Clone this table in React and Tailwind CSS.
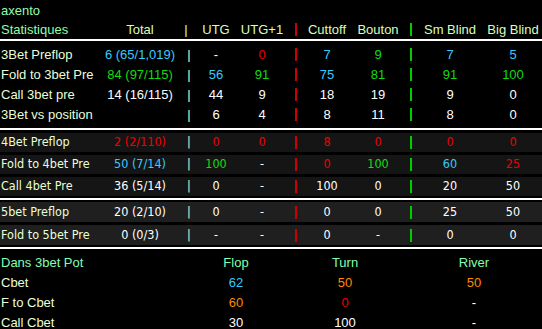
import React from "react";

const C = {
  c: "text-[#33ccff]",
  g: "text-[#11dd11]",
  r: "text-[#ee0000]",
  w: "text-white",
  o: "text-[#ff8800]",
};

const cols =
  "grid grid-cols-[104px_72px_26px_28px_64px_4px_58px_44px_22px_56px_70px] items-center";

const sections = [
  {
    bg: "bg-black",
    h: "h-[20px]",
    rows: [
      ["3Bet Preflop", ["6 (65/1,019)", "c"], [["-", "w"], ["0", "r"], ["7", "c"], ["9", "g"], ["7", "c"], ["5", "c"]]],
      ["Fold to 3bet Pre", ["84 (97/115)", "g"], [["56", "c"], ["91", "g"], ["75", "c"], ["81", "g"], ["91", "g"], ["100", "g"]]],
      ["Call 3bet pre", ["14 (16/115)", "w"], [["44", "w"], ["9", "w"], ["18", "w"], ["19", "w"], ["9", "w"], ["0", "w"]]],
      ["3Bet vs position", ["", "w"], [["6", "w"], ["4", "w"], ["8", "w"], ["11", "w"], ["8", "w"], ["0", "w"]]],
    ],
  },
  {
    bg: "bg-[#151515]",
    h: "h-[19px]",
    rows: [
      ["4Bet Preflop", ["2 (2/110)", "r"], [["0", "r"], ["0", "r"], ["8", "r"], ["0", "r"], ["0", "r"], ["0", "r"]]],
      ["Fold to 4bet Pre", ["50 (7/14)", "c"], [["100", "g"], ["-", "w"], ["0", "r"], ["100", "g"], ["60", "c"], ["25", "r"]]],
      ["Call 4bet Pre", ["36 (5/14)", "w"], [["0", "w"], ["-", "w"], ["100", "w"], ["0", "w"], ["20", "w"], ["50", "w"]]],
    ],
  },
  {
    bg: "bg-[#1f1f1f]",
    h: "h-[20px]",
    rows: [
      ["5bet Preflop", ["20 (2/10)", "w"], [["0", "w"], ["-", "w"], ["0", "w"], ["0", "w"], ["25", "w"], ["50", "w"]]],
      ["Fold to 5bet Pre", ["0 (0/3)", "w"], [["-", "w"], ["-", "w"], ["0", "w"], ["-", "w"], ["0", "w"], ["0", "w"]]],
    ],
  },
];

const Cell = ({ v, k }) => (
  <span className={`justify-self-center whitespace-nowrap ${C[k]}`}>{v}</span>
);

const Row = ({ row, bg, h }) => {
  const [label, total, vals] = row;
  return (
    <div className={`${cols} ${bg} ${h}`}>
      <span className="pl-[1px] whitespace-nowrap text-[#eaffd8]">{label}</span>
      <Cell v={total[0]} k={total[1]} />
      <span className="justify-self-center text-[#f0f0c8]">|</span>
      <Cell v={vals[0][0]} k={vals[0][1]} />
      <Cell v={vals[1][0]} k={vals[1][1]} />
      <span className="justify-self-center w-[2px] h-[13px] bg-[#cc0000]" />
      <Cell v={vals[2][0]} k={vals[2][1]} />
      <Cell v={vals[3][0]} k={vals[3][1]} />
      <span className="justify-self-center w-[2px] h-[13px] bg-[#00cc00]" />
      <Cell v={vals[4][0]} k={vals[4][1]} />
      <Cell v={vals[5][0]} k={vals[5][1]} />
    </div>
  );
};

const bottomCols = "grid grid-cols-[200px_72px_146px_112px] items-center h-[20px]";

const bottom = [
  ["Cbet", [["62", "c"], ["50", "o"], ["50", "o"]]],
  ["F to Cbet", [["60", "o"], ["0", "r"], ["-", "w"]]],
  ["Call Cbet", [["30", "w"], ["100", "w"], ["-", "w"]]],
];

const tahoma = "font-['DejaVu_Sans_Condensed',Tahoma,sans-serif] text-[12.5px]";

export default function App() {
  return (
    <div className="w-[542px] h-[329px] bg-black overflow-hidden font-['Liberation_Sans',Arial,sans-serif] text-[13px] leading-none">
      <div className="h-[20px] flex items-center pl-[1px] text-[#8fffa8]">axento</div>
      <div className={`${cols} h-[18px] text-[#d8ffb8]`}>
        <span className="pl-[1px] text-[#8fffa8]">Statistiques</span>
        <span className="justify-self-center">Total</span>
        <span className="justify-self-center -ml-[6px]">|</span>
        <span className="justify-self-center">UTG</span>
        <span className="justify-self-center">UTG+1</span>
        <span className="justify-self-center w-[2px] h-[13px] bg-[#cc0000]" />
        <span className="justify-self-center">Cuttoff</span>
        <span className="justify-self-center">Bouton</span>
        <span className="justify-self-center w-[2px] h-[13px] bg-[#00cc00]" />
        <span className="justify-self-center">Sm Blind</span>
        <span className="justify-self-center">Big Blind</span>
      </div>

      <div className="h-[2px] bg-white mt-[1px]" />
      <div className="flex flex-col pt-[3px] pb-[4px]">
        {sections[0].rows.map((r) => (
          <Row key={r[0]} row={r} bg={sections[0].bg} h={sections[0].h} />
        ))}
      </div>

      <div className="h-[2px] bg-white" />
      <div className={`flex flex-col gap-[3px] pt-[3px] pb-[2px] ${tahoma}`}>
        {sections[1].rows.map((r) => (
          <Row key={r[0]} row={r} bg={sections[1].bg} h={sections[1].h} />
        ))}
      </div>

      <div className="h-[2px] bg-white" />
      <div className={`flex flex-col gap-[3px] pt-[2px] pb-[2px] ${tahoma}`}>
        {sections[2].rows.map((r) => (
          <Row key={r[0]} row={r} bg={sections[2].bg} h={sections[2].h} />
        ))}
      </div>

      <div className="h-[2px] bg-white" />
      <div className="pt-[3px]">
        <div className={`${bottomCols} text-[#80ffb0]`}>
          <span className="pl-[1px]">Dans 3bet Pot</span>
          <span className="justify-self-center">Flop</span>
          <span className="justify-self-center">Turn</span>
          <span className="justify-self-center">River</span>
        </div>
        {bottom.map(([label, vals]) => (
          <div key={label} className={bottomCols}>
            <span className="pl-[1px] text-[#eaffd8]">{label}</span>
            {vals.map(([v, k], i) => (
              <Cell key={i} v={v} k={k} />
            ))}
          </div>
        ))}
      </div>
    </div>
  );
}
